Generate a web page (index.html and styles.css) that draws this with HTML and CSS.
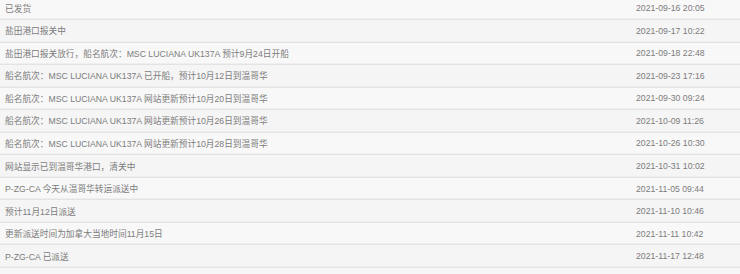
FILE: index.html
```html
<!DOCTYPE html>
<html lang="zh-CN">
<head>
<meta charset="utf-8">
<title>物流轨迹</title>
<link rel="stylesheet" href="styles.css">
</head>
<body>
<ul class="track">
  <li class="row"><span class="msg">已发货</span><span class="time">2021-09-16 20:05</span></li>
  <li class="row"><span class="msg">盐田港口报关中</span><span class="time">2021-09-17 10:22</span></li>
  <li class="row"><span class="msg">盐田港口报关放行，船名航次：MSC LUCIANA UK137A 预计9月24日开船</span><span class="time">2021-09-18 22:48</span></li>
  <li class="row"><span class="msg">船名航次：MSC LUCIANA UK137A 已开船，预计10月12日到温哥华</span><span class="time">2021-09-23 17:16</span></li>
  <li class="row"><span class="msg">船名航次：MSC LUCIANA UK137A 网站更新预计10月20日到温哥华</span><span class="time">2021-09-30 09:24</span></li>
  <li class="row"><span class="msg">船名航次：MSC LUCIANA UK137A 网站更新预计10月26日到温哥华</span><span class="time">2021-10-09 11:26</span></li>
  <li class="row"><span class="msg">船名航次：MSC LUCIANA UK137A 网站更新预计10月28日到温哥华</span><span class="time">2021-10-26 10:30</span></li>
  <li class="row"><span class="msg">网站显示已到温哥华港口，清关中</span><span class="time">2021-10-31 10:02</span></li>
  <li class="row"><span class="msg">P-ZG-CA 今天从温哥华转运派送中</span><span class="time">2021-11-05 09:44</span></li>
  <li class="row"><span class="msg">预计11月12日派送</span><span class="time">2021-11-10 10:46</span></li>
  <li class="row"><span class="msg">更新派送时间为加拿大当地时间11月15日</span><span class="time">2021-11-11 10:42</span></li>
  <li class="row"><span class="msg">P-ZG-CA 已派送</span><span class="time">2021-11-17 12:48</span></li>
</ul>
</body>
</html>
```
FILE: styles.css
```css
html, body {
  margin: 0;
  padding: 0;
  background: #f7f7f7;
  overflow: hidden;
}
.track {
  list-style: none;
  margin: -2.6px 0 0 0;
  padding: 0;
  font-family: "Liberation Sans", "Noto Sans CJK SC", sans-serif;
  font-size: 8.7px;
  color: #7c7c7c;
}
.row {
  display: flex;
  align-items: center;
  justify-content: space-between;
  box-sizing: border-box;
  height: 22.55px;
  padding: 0 32px 0 5px;
  background: #f8f8f8;
  border-bottom: 1px solid #e3e3e3;
  box-shadow: inset 0 -1px 0 #efefef;
}
.row:nth-child(even) {
  background: #f5f5f5;
}
.msg {
  white-space: nowrap;
}
.time {
  white-space: nowrap;
  min-width: 72px;
  text-align: left;
}
```
